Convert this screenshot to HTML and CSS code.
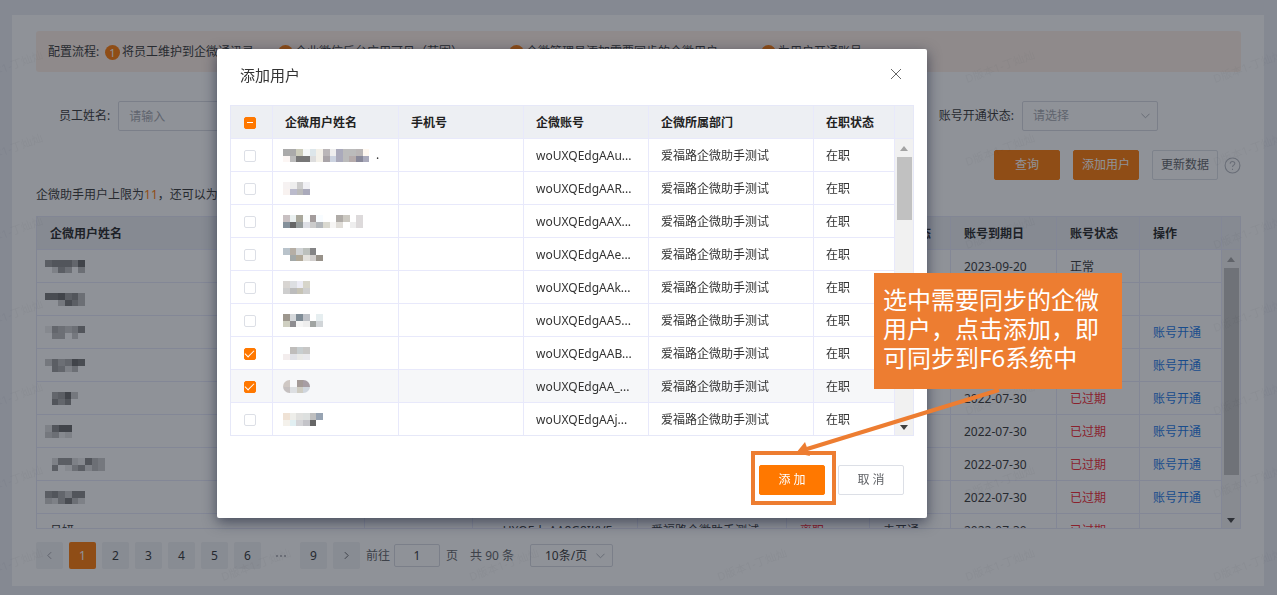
FILE: index.html
```html
<!DOCTYPE html>
<html lang="zh-CN">
<head>
<meta charset="utf-8">
<title>企微助手用户</title>
<link rel="stylesheet" href="styles.css">
</head>
<body>
<main class="card">
  <ol class="steps">
    <li class="steps-title">配置流程:</li>
    <li class="step"><b class="num">1</b>将员工维护到企微通讯录</li>
    <li class="step"><b class="num">2</b>企业微信后台应用可见（范围）</li>
    <li class="step"><b class="num">3</b>企微管理员添加需要同步的企微用户</li>
    <li class="step"><b class="num">4</b>为用户开通账号</li>
  </ol>

  <form class="filters">
    <div class="field"><label for="name">员工姓名:</label><input class="control" id="name" type="text" placeholder="请输入"></div>
    <div class="field"><label for="status">账号开通状态:</label>
      <span class="select-wrap"><select class="control muted" id="status"><option>请选择</option></select><svg class="chevron" viewBox="0 0 10 6"><path d="M0.5 0.5 5 5 9.5 0.5"/></svg></span>
    </div>
  </form>

  <div class="actions">
    <button class="btn primary" type="button">查询</button>
    <button class="btn primary" type="button">添加用户</button>
    <button class="btn" type="button">更新数据</button>
    <svg class="help" viewBox="0 0 16 16"><circle cx="8" cy="8" r="7"/><path d="M5.8 6.4C5.8 5 6.7 4.2 8 4.2s2.2.8 2.2 2c0 1.4-2.2 1.6-2.2 3.2M8 11v1.2"/></svg>
  </div>

  <p class="quota">企微助手用户上限为<em>11</em>，还可以为<em>8</em>个用户开通账号</p>

  <div class="grid main-grid">
    <table>
      <colgroup><col><col class="w108"><col class="w165"><col class="w149"><col class="w83"><col class="w81"><col class="w106"><col class="w83"><col class="w82"></colgroup>
      <thead><tr><th>企微用户姓名</th><th>手机号</th><th>企微账号</th><th>企微所属部门</th><th>在职状态</th><th>开通状态</th><th>账号到期日</th><th>账号状态</th><th>操作</th></tr></thead>
      <tbody>
        <tr><td class="blur"><svg class="mosaic" data-cells="999 888 888 888 aaa 666/- ddd 999 bbb - bbb"></svg></td><td></td><td></td><td></td><td></td><td></td><td>2023-09-20</td><td>正常</td><td></td></tr>
        <tr><td class="blur"><svg class="mosaic" data-cells="777 777 666 999 888 bbb/- - ccc 777 999 bbb"></svg></td><td></td><td></td><td></td><td></td><td></td><td></td><td></td><td></td></tr>
        <tr><td class="blur"><svg class="mosaic" data-cells="eee aaa bbb ccc bbb 888/- bbb bbb - ccc -"></svg></td><td></td><td></td><td></td><td></td><td></td><td></td><td></td><td><a href="#">账号开通</a></td></tr>
        <tr><td class="blur"><svg class="mosaic" data-cells="ccc 999 bbb aaa 666 777/- 999 aaa ddd bbb -"></svg></td><td></td><td></td><td></td><td></td><td></td><td></td><td></td><td><a href="#">账号开通</a></td></tr>
        <tr><td class="blur"><svg class="mosaic" data-cells="- aaa 999 666 ccc/- 888 aaa 888 -"></svg></td><td></td><td></td><td></td><td></td><td></td><td>2022-07-30</td><td class="red">已过期</td><td><a href="#">账号开通</a></td></tr>
        <tr><td class="blur"><svg class="mosaic" data-cells="ddd 888 666 666/ccc bbb eee ddd"></svg></td><td></td><td></td><td></td><td></td><td></td><td>2022-07-30</td><td class="red">已过期</td><td><a href="#">账号开通</a></td></tr>
        <tr><td class="blur"><svg class="mosaic" data-cells="- ddd 999 999 ddd eee 888 bbb ccc/- 999 - eee bbb 999 ddd bbb ccc"></svg></td><td></td><td></td><td></td><td></td><td></td><td>2022-07-30</td><td class="red">已过期</td><td><a href="#">账号开通</a></td></tr>
        <tr><td class="blur"><svg class="mosaic" data-cells="999 888 aaa ccc 888 888/ccc ddd aaa 777 bbb ddd"></svg></td><td></td><td></td><td></td><td></td><td></td><td>2022-07-30</td><td class="red">已过期</td><td><a href="#">账号开通</a></td></tr>
        <tr><td>吕妍</td><td></td><td>woUXQEdgAA8G8IKVE</td><td>爱福路企微助手测试</td><td class="red">离职</td><td>未开通</td><td>2022-07-30</td><td class="red">已过期</td><td></td></tr>
      </tbody>
    </table>
    <div class="scroll"><i class="corner"></i><i class="arrow up"></i><i class="thumb"></i><i class="arrow down"></i></div>
  </div>

  <nav class="pager">
    <button class="page-btn" type="button" aria-label="上一页"><svg class="angle" viewBox="0 0 6 10"><path d="M5 1 1 5l4 4"/></svg></button>
    <button class="page-btn current" type="button">1</button>
    <button class="page-btn" type="button">2</button>
    <button class="page-btn" type="button">3</button>
    <button class="page-btn" type="button">4</button>
    <button class="page-btn" type="button">5</button>
    <button class="page-btn" type="button">6</button>
    <span class="dots"><i></i><i></i><i></i></span>
    <button class="page-btn" type="button">9</button>
    <button class="page-btn" type="button" aria-label="下一页"><svg class="angle dark" viewBox="0 0 6 10"><path d="M1 1l4 4-4 4"/></svg></button>
    <label for="goto">前往</label><input class="control goto" id="goto" type="text" value="1"><span>页</span>
    <span class="total">共 90 条</span>
    <span class="select-wrap size"><select class="control" aria-label="每页条数"><option>10条/页</option></select><svg class="chevron" viewBox="0 0 10 6"><path d="M0.5 0.5 5 5 9.5 0.5"/></svg></span>
  </nav>
</main>

<svg class="watermark" aria-hidden="true">
  <defs><pattern id="wm" x="215" y="7" width="248" height="83" patternUnits="userSpaceOnUse"><text x="8" y="76" transform="rotate(-20 8 76)">D版本1-丁灿灿</text></pattern></defs>
  <rect width="100%" height="100%" fill="url(#wm)"/>
</svg>
<div class="mask"></div>

<section class="modal" role="dialog" aria-labelledby="dlg-title">
  <header class="modal-head">
    <h2 id="dlg-title">添加用户</h2>
    <button class="close" type="button" aria-label="关闭"><svg viewBox="0 0 12 12"><path d="M1 1l10 10M11 1 1 11"/></svg></button>
  </header>
  <div class="grid user-grid">
    <table>
      <colgroup><col class="w42"><col class="w126"><col class="w125"><col class="w125"><col class="w165"><col></colgroup>
      <thead><tr><th class="pick"><input class="some" type="checkbox" aria-label="全选"></th><th>企微用户姓名</th><th>手机号</th><th>企微账号</th><th>企微所属部门</th><th>在职状态</th></tr></thead>
      <tbody>
        <tr><td class="pick"><input type="checkbox" aria-label="选择用户1"></td><td class="blur"><svg class="mosaic" data-cells="aaa aaa ccb f5f8f8 dde6ea f3f0e8 bab6b8 eee aab bbb bbb bab6b6 fff8f0 -/fcf6f4 bbb 777 777 ddd f3f0e8 a9a4a8 ccd3e0 aab bbb b5abab 889 aab -"></svg>.</td><td></td><td>woUXQEdgAAu...</td><td>爱福路企微助手测试</td><td>在职</td></tr>
        <tr><td class="pick"><input type="checkbox" aria-label="选择用户2"></td><td class="blur"><svg class="mosaic" data-cells="f6f2f2 eee ccc f0f0f4/f8f2f0 bbc bbb aab"></svg></td><td></td><td>woUXQEdgAAR...</td><td>爱福路企微助手测试</td><td>在职</td></tr>
        <tr><td class="pick"><input type="checkbox" aria-label="选择用户3"></td><td class="blur"><svg class="mosaic" data-cells="c8c0c2 eaf0f0 aaa89c fafcfc a39c9c f8fcff - - b0aca8 ccc9c2 - dddadb/84909b 666 979d9d dddfe5 ccc b4b8bc dad9d0 f6f5f4 e0ddd8 - eee dddadb"></svg></td><td></td><td>woUXQEdgAAX...</td><td>爱福路企微助手测试</td><td>在职</td></tr>
        <tr><td class="pick"><input type="checkbox" aria-label="选择用户4"></td><td class="blur"><svg class="mosaic" data-cells="b9c3cb b5aea5 d0d3d5 bcc0bc 848486 -/- a2a8a8 b0a897 e3e1dc d1cecd 98928a"></svg></td><td></td><td>woUXQEdgAAe...</td><td>爱福路企微助手测试</td><td>在职</td></tr>
        <tr><td class="pick"><input type="checkbox" aria-label="选择用户5"></td><td class="blur"><svg class="mosaic" data-cells="d8d5d2 dddfe2 ececf5 d7d5ca/cecece bcbcbc c6c3b5 cfcfcf"></svg></td><td></td><td>woUXQEdgAAk...</td><td>爱福路企微助手测试</td><td>在职</td></tr>
        <tr><td class="pick"><input type="checkbox" aria-label="选择用户6"></td><td class="blur"><svg class="mosaic" data-cells="9d978e d5d8db 7f8c96 bfc2c8 - e6eef0/cfcfc1 8e8d91 f5f5f5 eee a0a4a2 d1d5d8"></svg></td><td></td><td>woUXQEdgAA5...</td><td>爱福路企微助手测试</td><td>在职</td></tr>
        <tr><td class="pick"><input type="checkbox" aria-label="选择用户7" checked></td><td class="blur"><svg class="mosaic" data-cells="- bfbdbb c7cdcf c8c7c6/f3eded e1e2e7 e9e9e7 e9e9ed"></svg></td><td></td><td>woUXQEdgAAB...</td><td>爱福路企微助手测试</td><td>在职</td></tr>
        <tr class="hover"><td class="pick"><input type="checkbox" aria-label="选择用户8" checked></td><td class="blur"><svg class="mosaic round" data-cells="cfc8c4 f8f8fa a49a97 a79da4/c5c0c0 dddfe2 cfccc2 d0d6de"></svg></td><td></td><td>woUXQEdgAA_...</td><td>爱福路企微助手测试</td><td>在职</td></tr>
        <tr><td class="pick"><input type="checkbox" aria-label="选择用户9"></td><td class="blur"><svg class="mosaic" data-cells="efe2d5 eeeeea e1e1df dde0df bfbfbf 97a3b2/f4f1eb e1eff2 d5d5d8 c4c4c9 666 -"></svg></td><td></td><td>woUXQEdgAAj...</td><td>爱福路企微助手测试</td><td>在职</td></tr>
      </tbody>
    </table>
    <div class="scroll"><i class="corner"></i><i class="arrow up"></i><i class="thumb"></i><i class="arrow down"></i></div>
  </div>
  <footer class="modal-foot">
    <button class="btn primary" type="button">添 加</button>
    <button class="btn" type="button">取 消</button>
  </footer>
</section>

<div class="frame"></div>
<svg class="pointer" viewBox="0 0 210 70"><path class="shaft" d="M208 2 16 61"/><path d="M5 65 14 54 19 68Z"/></svg>
<aside class="callout">选中需要同步的企微用户，点击添加，即可同步到F6系统中</aside>
<script src="mosaic.js"></script>
</body>
</html>
```
FILE: mosaic.js
```js
// Fills each masked name with its two rows of colour cells.
const NS = 'http://www.w3.org/2000/svg';
document.querySelectorAll('.mosaic').forEach(svg => {
  const rows = svg.dataset.cells.split('/').map(r => r.split(' '));
  const n = Math.max(...rows.map(r => r.length));
  svg.setAttribute('viewBox', `0 0 ${n * 20} 40`);
  svg.setAttribute('width', Math.round(n * 20 / 3));
  svg.setAttribute('height', 13);
  svg.setAttribute('preserveAspectRatio', 'none');
  svg.setAttribute('shape-rendering', 'crispEdges');
  rows.forEach((row, y) => row.forEach((colour, x) => {
    if (colour === '-') return;
    const cell = document.createElementNS(NS, 'rect');
    cell.setAttribute('x', x * 20);
    cell.setAttribute('y', y * 20);
    cell.setAttribute('width', 20);
    cell.setAttribute('height', 20);
    cell.setAttribute('fill', '#' + colour);
    svg.append(cell);
  }));
});
```
FILE: styles.css
```css
* { box-sizing: border-box; }
body {
  margin: 0;
  padding: 15px 13px 9px 12px;
  min-height: 100vh;
  background: #ebedf4;
  color: #333;
  font: 12px/20px "Noto Sans", "Noto Sans CJK SC", sans-serif;
}
button, input, select { font: inherit; color: inherit; }
a { color: #1677e8; text-decoration: none; }
.red { color: #f5222d; }

.card { background: #fff; padding: 16px 23px 17px 24px; }

.steps {
  display: grid;
  grid-template-columns: 57px 173px 231px 252px auto;
  align-items: center;
  height: 41px;
  margin: 0;
  padding: 1px 12px 0;
  list-style: none;
  background: #fff0e6;
  border-radius: 3px;
  white-space: nowrap;
}
.step { display: flex; align-items: center; gap: 2px; }
.num {
  width: 15px;
  height: 15px;
  border-radius: 50%;
  background: #ff7800;
  color: #fff;
  font-size: 11px;
  font-weight: 400;
  line-height: 15px;
  text-align: center;
}

.filters { display: flex; justify-content: space-between; padding: 29px 83px 19px 23px; }
.field { display: flex; align-items: center; gap: 8px; }
.control {
  width: 136px;
  height: 30px;
  padding: 0 10px;
  border: 1px solid #d8dae2;
  border-radius: 2px;
  background: transparent;
  appearance: none;
}
.control::placeholder, .muted { color: #a3a6ad; }
.select-wrap { position: relative; display: flex; }
.chevron {
  position: absolute;
  right: 8px;
  top: 50%;
  width: 9px;
  height: 6px;
  margin-top: -3px;
  fill: none;
  stroke: #a8abb3;
}

.actions { display: flex; justify-content: flex-end; align-items: center; }
.btn {
  width: 66px;
  height: 30px;
  margin-right: 13px;
  padding: 0;
  border: 1px solid #dcdfe6;
  border-radius: 2px;
  background: #fff;
  color: #606266;
}
.btn.primary { background: #ff7800; border-color: #ff7800; color: #fff; }
.actions .btn:nth-of-type(3) { margin-right: 6px; }
.help { width: 17px; height: 17px; fill: none; stroke: #b4b7be; }

.quota { margin: 5px 0 11px; }
.quota em { color: #ff7800; font-style: normal; }

.grid { display: flex; border: 1px solid #e6e8f8; overflow: hidden; }
.grid table { flex: 1; width: 0; table-layout: fixed; border-collapse: separate; border-spacing: 0; }
.grid th, .grid td {
  height: 33px;
  padding: 2px 0 0 12px;
  border-right: 1px solid #e8e9fb;
  border-bottom: 1px solid #e8e9fb;
  text-align: left;
  white-space: nowrap;
}
.grid th { background: #edeff3; color: #222; font-weight: 700; }
.grid .blur { padding: 0 0 0 10px; }
.mosaic { vertical-align: middle; }
.round { border-radius: 7px; }
.main-grid { height: 313px; }
.main-grid th, .main-grid td { padding-left: 13px; }
.main-grid .blur { padding-left: 8px; }
.w42 { width: 42px; }
.w81 { width: 81px; }
.w82 { width: 82px; }
.w83 { width: 83px; }
.w106 { width: 106px; }
.w108 { width: 108px; }
.w125 { width: 125px; }
.w126 { width: 126px; }
.w149 { width: 149px; }
.w165 { width: 165px; }

.scroll { display: flex; flex-direction: column; align-items: center; width: 18px; background: #f1f1f1; }
.corner { align-self: stretch; height: 33px; background: #edeff3; border-bottom: 1px solid #e8e9fb; }
.arrow { margin: 7px 0 6px; border: 4px solid transparent; border-top: 0; border-bottom: 5px solid #a3a3a3; }
.arrow.down { margin-top: auto; margin-bottom: 5px; border-top: 5px solid #404040; border-bottom: 0; }
.thumb { width: 15px; height: 63px; background: #c1c1c1; }
.main-grid .thumb { height: 207px; }

.pager { display: flex; align-items: center; gap: 6px; height: 27px; margin-top: 13px; color: #606266; }
.page-btn {
  display: flex;
  align-items: center;
  justify-content: center;
  width: 27px;
  height: 27px;
  padding: 0;
  border: 0;
  border-radius: 2px;
  background: #f2f3f5;
  color: #303133;
}
.page-btn.current { background: #ff7800; color: #fff; }
.angle { width: 5px; height: 9px; fill: none; stroke: #a0a0a8; stroke-width: 1.2; }
.angle.dark { stroke: #606266; }
.dots { display: flex; justify-content: center; gap: 2px; width: 27px; }
.dots i { width: 2px; height: 2px; border-radius: 50%; background: #a0a0a8; }
.goto { width: 46px; height: 23px; text-align: center; color: #333; }
.pager label { margin-right: -2px; }
.total { margin: 0 10px 0 6px; }
.size .control { width: 83px; height: 23px; padding: 0 14px; line-height: 20px; color: #333; }

.watermark { position: fixed; inset: 0; width: 100%; height: 100%; pointer-events: none; }
.watermark text { font-size: 11px; fill: #000; fill-opacity: 0.04; }
.mask { position: fixed; inset: 0; background: rgba(26, 32, 45, 0.49); }

.modal {
  position: absolute;
  left: 217px;
  top: 49px;
  width: 710px;
  padding: 15px 13px 23px;
  background: #fff;
  border-radius: 2px;
  box-shadow: 0 4px 14px rgba(20, 26, 50, 0.6);
}
.modal-head { display: flex; align-items: flex-start; justify-content: space-between; padding: 0 12px 19px 10px; }
.modal-head h2 { margin: 0; font-size: 15px; font-weight: 400; line-height: 22px; }
.close { width: 12px; height: 12px; margin-top: 4px; padding: 0; border: 0; background: none; }
.close svg { display: block; width: 12px; height: 12px; fill: none; stroke: #666; }
.user-grid tr:last-child td { height: 32px; border-bottom: 0; }
.user-grid thead th { height: 33px; }
.hover td { background: #f6f7f9; }
.grid .pick { padding: 0 4px 0 0; text-align: center; }
.pick input {
  display: inline-grid;
  place-items: center;
  width: 12px;
  height: 12px;
  margin: 0;
  border: 1px solid #dcdfe6;
  border-radius: 2px;
  background: #fff;
  vertical-align: middle;
  appearance: none;
}
.pick input:checked, .pick .some { background: #ff7800; border-color: #ff7800; }
.pick input:checked::after {
  content: "";
  width: 8px;
  height: 4px;
  margin-bottom: 2px;
  border: solid #fff;
  border-width: 0 0 1px 1px;
  transform: rotate(-45deg);
}
.pick .some::after { content: ""; width: 6px; height: 1px; background: #fff; }
.modal-foot { display: flex; justify-content: flex-end; gap: 13px; padding: 29px 10px 0 0; }
.modal-foot .btn { margin: 0; }

.frame { position: absolute; left: 751px; top: 451px; width: 85px; height: 54px; border: 4px solid #ed7d31; }
.pointer { position: absolute; left: 791px; top: 388px; width: 210px; height: 70px; fill: #ed7d31; }
.shaft { stroke: #ed7d31; stroke-width: 4; }
.callout {
  position: absolute;
  left: 874px;
  top: 273px;
  width: 248px;
  padding: 12px 9px 17px;
  background: #ed7d31;
  color: #fff;
  font-size: 24px;
  line-height: 29px;
}
```
